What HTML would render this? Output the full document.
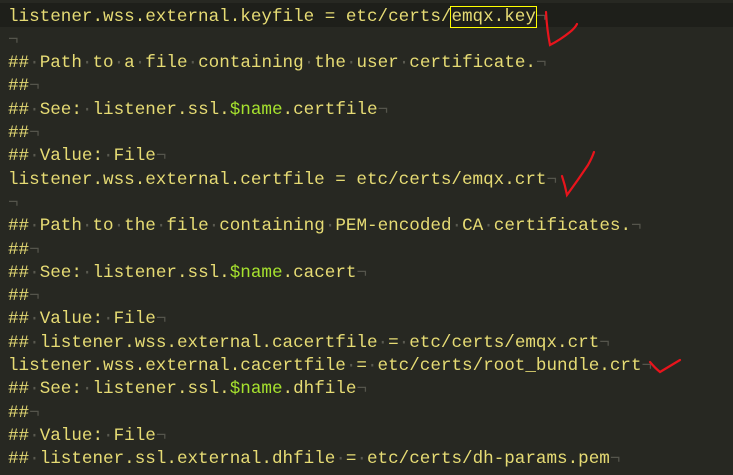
<!DOCTYPE html><html><head><style>
body{margin:0;width:733px;height:475px;background:#272822;overflow:hidden;font-family:"Liberation Mono",monospace;font-size:17.6px;color:#e6db74}
.l{position:absolute;left:8px;height:23.3px;line-height:23.3px;white-space:pre;margin-top:2.5px}
.cur{position:absolute;left:0;top:3px;width:733px;height:24px;background:#1e1f1a}
.d{color:#5a5a50}.g{color:#a6e22e}.p{color:#55554c}
</style></head><body>
<div class="cur"></div>
<div class="l" style="top:3px">listener.wss.external.keyfile = etc/certs/<span style="outline:1.5px solid #ffff00;outline-offset:0">emqx.key</span><span class="p">¬</span></div>
<div class="l" style="top:26.3px"><span class="p">¬</span></div>
<div class="l" style="top:49.6px">##<span class="d">·</span>Path<span class="d">·</span>to<span class="d">·</span>a<span class="d">·</span>file<span class="d">·</span>containing<span class="d">·</span>the<span class="d">·</span>user<span class="d">·</span>certificate.<span class="p">¬</span></div>
<div class="l" style="top:72.9px">##<span class="p">¬</span></div>
<div class="l" style="top:96.2px">##<span class="d">·</span>See:<span class="d">·</span>listener.ssl.<span class="g">$name</span>.certfile<span class="p">¬</span></div>
<div class="l" style="top:119.5px">##<span class="p">¬</span></div>
<div class="l" style="top:142.8px">##<span class="d">·</span>Value:<span class="d">·</span>File<span class="p">¬</span></div>
<div class="l" style="top:166.1px">listener.wss.external.certfile = etc/certs/emqx.crt<span class="p">¬</span></div>
<div class="l" style="top:189.4px"><span class="p">¬</span></div>
<div class="l" style="top:212.7px">##<span class="d">·</span>Path<span class="d">·</span>to<span class="d">·</span>the<span class="d">·</span>file<span class="d">·</span>containing<span class="d">·</span>PEM-encoded<span class="d">·</span>CA<span class="d">·</span>certificates.<span class="p">¬</span></div>
<div class="l" style="top:236px">##<span class="p">¬</span></div>
<div class="l" style="top:259.3px">##<span class="d">·</span>See:<span class="d">·</span>listener.ssl.<span class="g">$name</span>.cacert<span class="p">¬</span></div>
<div class="l" style="top:282.6px">##<span class="p">¬</span></div>
<div class="l" style="top:305.9px">##<span class="d">·</span>Value:<span class="d">·</span>File<span class="p">¬</span></div>
<div class="l" style="top:329.2px">##<span class="d">·</span>listener.wss.external.cacertfile<span class="d">·</span>=<span class="d">·</span>etc/certs/emqx.crt<span class="p">¬</span></div>
<div class="l" style="top:352.5px">listener.wss.external.cacertfile<span class="d">·</span>=<span class="d">·</span>etc/certs/root_bundle.crt<span class="p">¬</span></div>
<div class="l" style="top:375.8px">##<span class="d">·</span>See:<span class="d">·</span>listener.ssl.<span class="g">$name</span>.dhfile<span class="p">¬</span></div>
<div class="l" style="top:399.1px">##<span class="p">¬</span></div>
<div class="l" style="top:422.4px">##<span class="d">·</span>Value:<span class="d">·</span>File<span class="p">¬</span></div>
<div class="l" style="top:445.7px">##<span class="d">·</span>listener.ssl.external.dhfile<span class="d">·</span>=<span class="d">·</span>etc/certs/dh-params.pem<span class="p">¬</span></div>
<svg width="733" height="475" style="position:absolute;left:0;top:0" fill="none" stroke="#e8141c" stroke-width="2.2" stroke-linecap="round">
<path d="M546 12 Q547 30 550 45 Q560 40 570 32 Q575 28 577 24"/>
<path d="M562 176 Q565 185 567 195 Q578 180 588 165 Q592 158 594 152"/>
<path d="M650 362 Q655 368 660 372 Q670 366 680 360"/>
</svg>
</body></html>
